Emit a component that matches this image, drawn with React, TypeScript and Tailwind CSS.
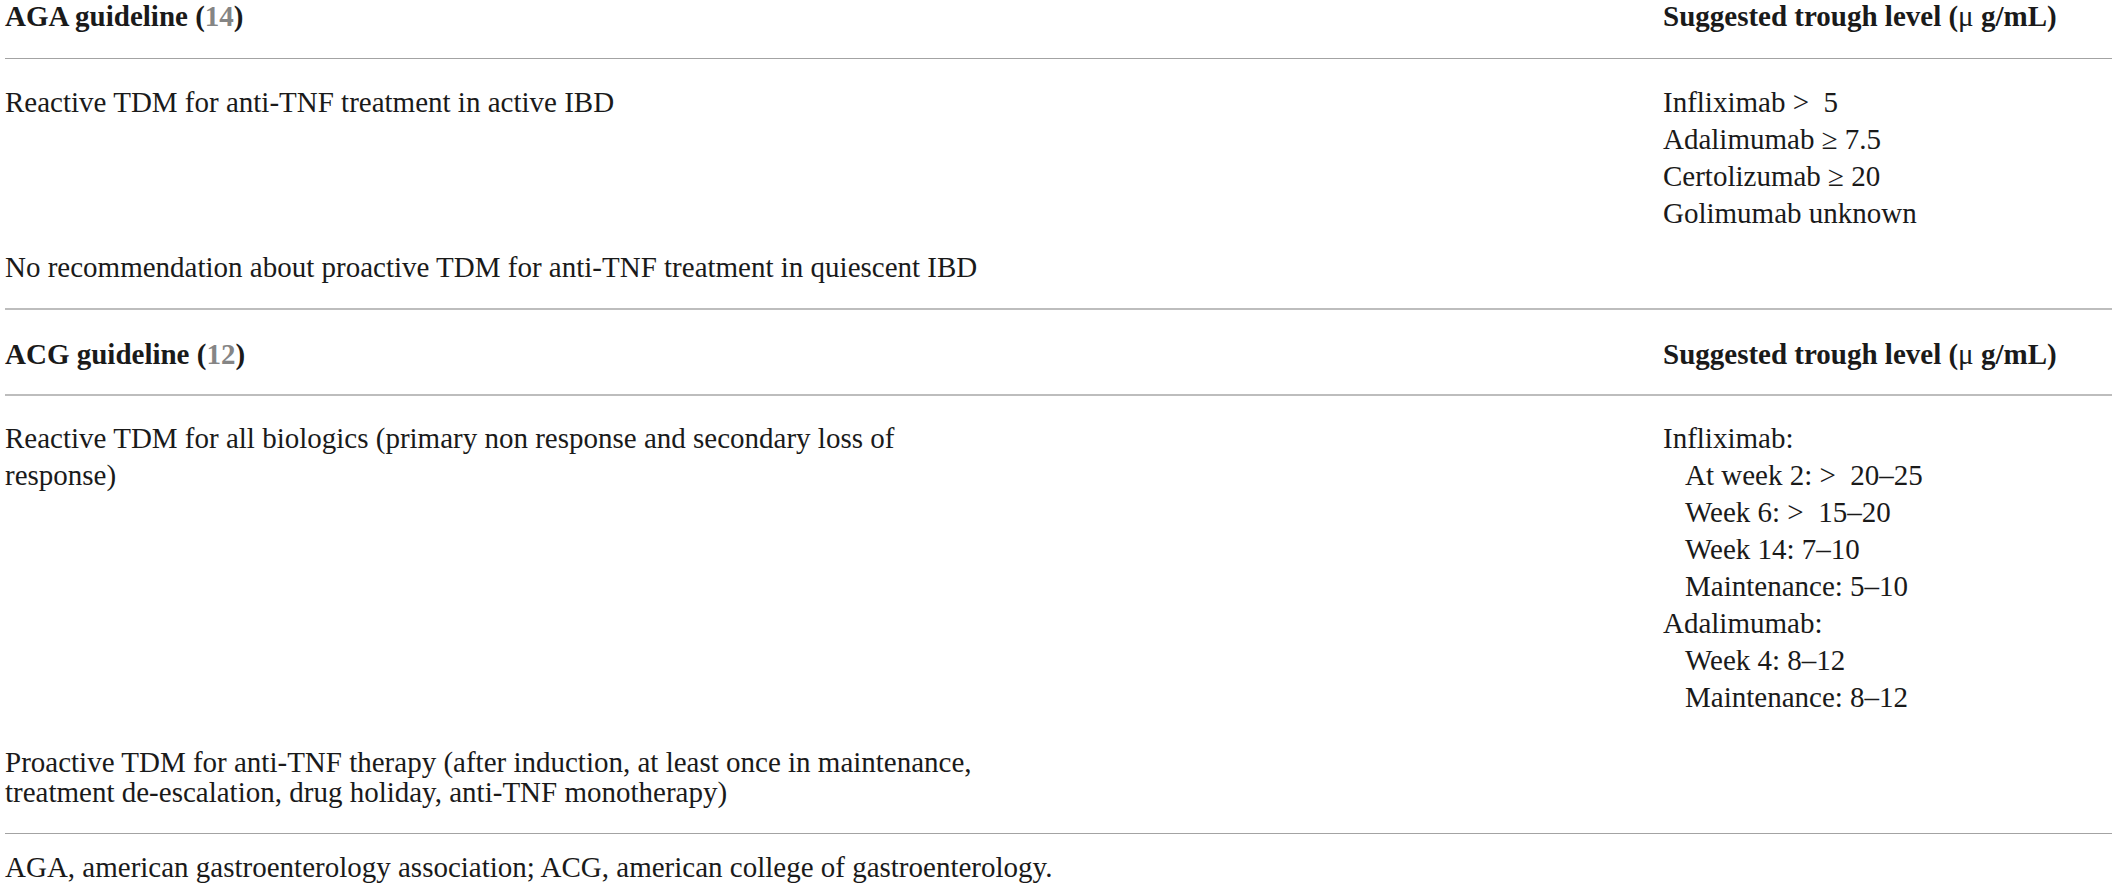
const agaLevels = ['Infliximab > \u00a05', 'Adalimumab \u2265 7.5', 'Certolizumab \u2265 20', 'Golimumab unknown']

const acgLevels = [
  { text: 'Infliximab:', sub: false },
  { text: 'At week 2: > \u00a020\u201325', sub: true },
  { text: 'Week 6: > \u00a015\u201320', sub: true },
  { text: 'Week 14: 7\u201310', sub: true },
  { text: 'Maintenance: 5\u201310', sub: true },
  { text: 'Adalimumab:', sub: false },
  { text: 'Week 4: 8\u201312', sub: true },
  { text: 'Maintenance: 8\u201312', sub: true },
]

function HeadCells({ name, cite }: { name: string; cite: string }) {
  return (
    <>
      <div>
        {name} (<span className="text-[#858585]">{cite}</span>)
      </div>
      <div>
        Suggested trough level (<span className="font-normal">μ</span> g/mL)
      </div>
    </>
  )
}

export default function App() {
  return (
    <main className="min-h-screen bg-white px-[5px] font-['Liberation_Serif',serif] text-[29px] text-[#1a1a1a]">
      {/* AGA */}
      <div className="grid grid-cols-[1658px_1fr] pb-[26px] leading-[32px] font-bold border-b border-[#a3a3a3]">
        <HeadCells name="AGA guideline" cite="14" />
      </div>
      <div className="grid grid-cols-[1658px_1fr] pt-[25px] leading-[37px]">
        <div>Reactive TDM for anti-TNF treatment in active IBD</div>
        <div>
          {agaLevels.map((l) => (
            <div key={l}>{l}</div>
          ))}
        </div>
      </div>
      <div className="grid grid-cols-[1658px_1fr] pt-[17px] pb-[22px] leading-[37px] border-b-2 border-[#bdbdbd]">
        <div>No recommendation about proactive TDM for anti-TNF treatment in quiescent IBD</div>
        <div />
      </div>

      {/* ACG */}
      <div className="grid grid-cols-[1658px_1fr] pt-[28px] pb-[24px] leading-[32px] font-bold border-b-2 border-[#bdbdbd]">
        <HeadCells name="ACG guideline" cite="12" />
      </div>
      <div className="grid grid-cols-[1658px_1fr] pt-[24px] leading-[37px]">
        <div>
          Reactive TDM for all biologics (primary non response and secondary loss of
          <br />
          response)
        </div>
        <div>
          {acgLevels.map((l) => (
            <div key={l.text} className={l.sub ? 'pl-[22px]' : ''}>
              {l.text}
            </div>
          ))}
        </div>
      </div>
      <div className="grid grid-cols-[1658px_1fr] pt-[31px] pb-[26px] leading-[30px] border-b border-[#a3a3a3]">
        <div>
          Proactive TDM for anti-TNF therapy (after induction, at least once in maintenance,
          <br />
          treatment de-escalation, drug holiday, anti-TNF monotherapy)
        </div>
        <div />
      </div>

      <p className="pt-[18px] leading-[30px]">
        AGA, american gastroenterology association; ACG, american college of gastroenterology.
      </p>
    </main>
  )
}
